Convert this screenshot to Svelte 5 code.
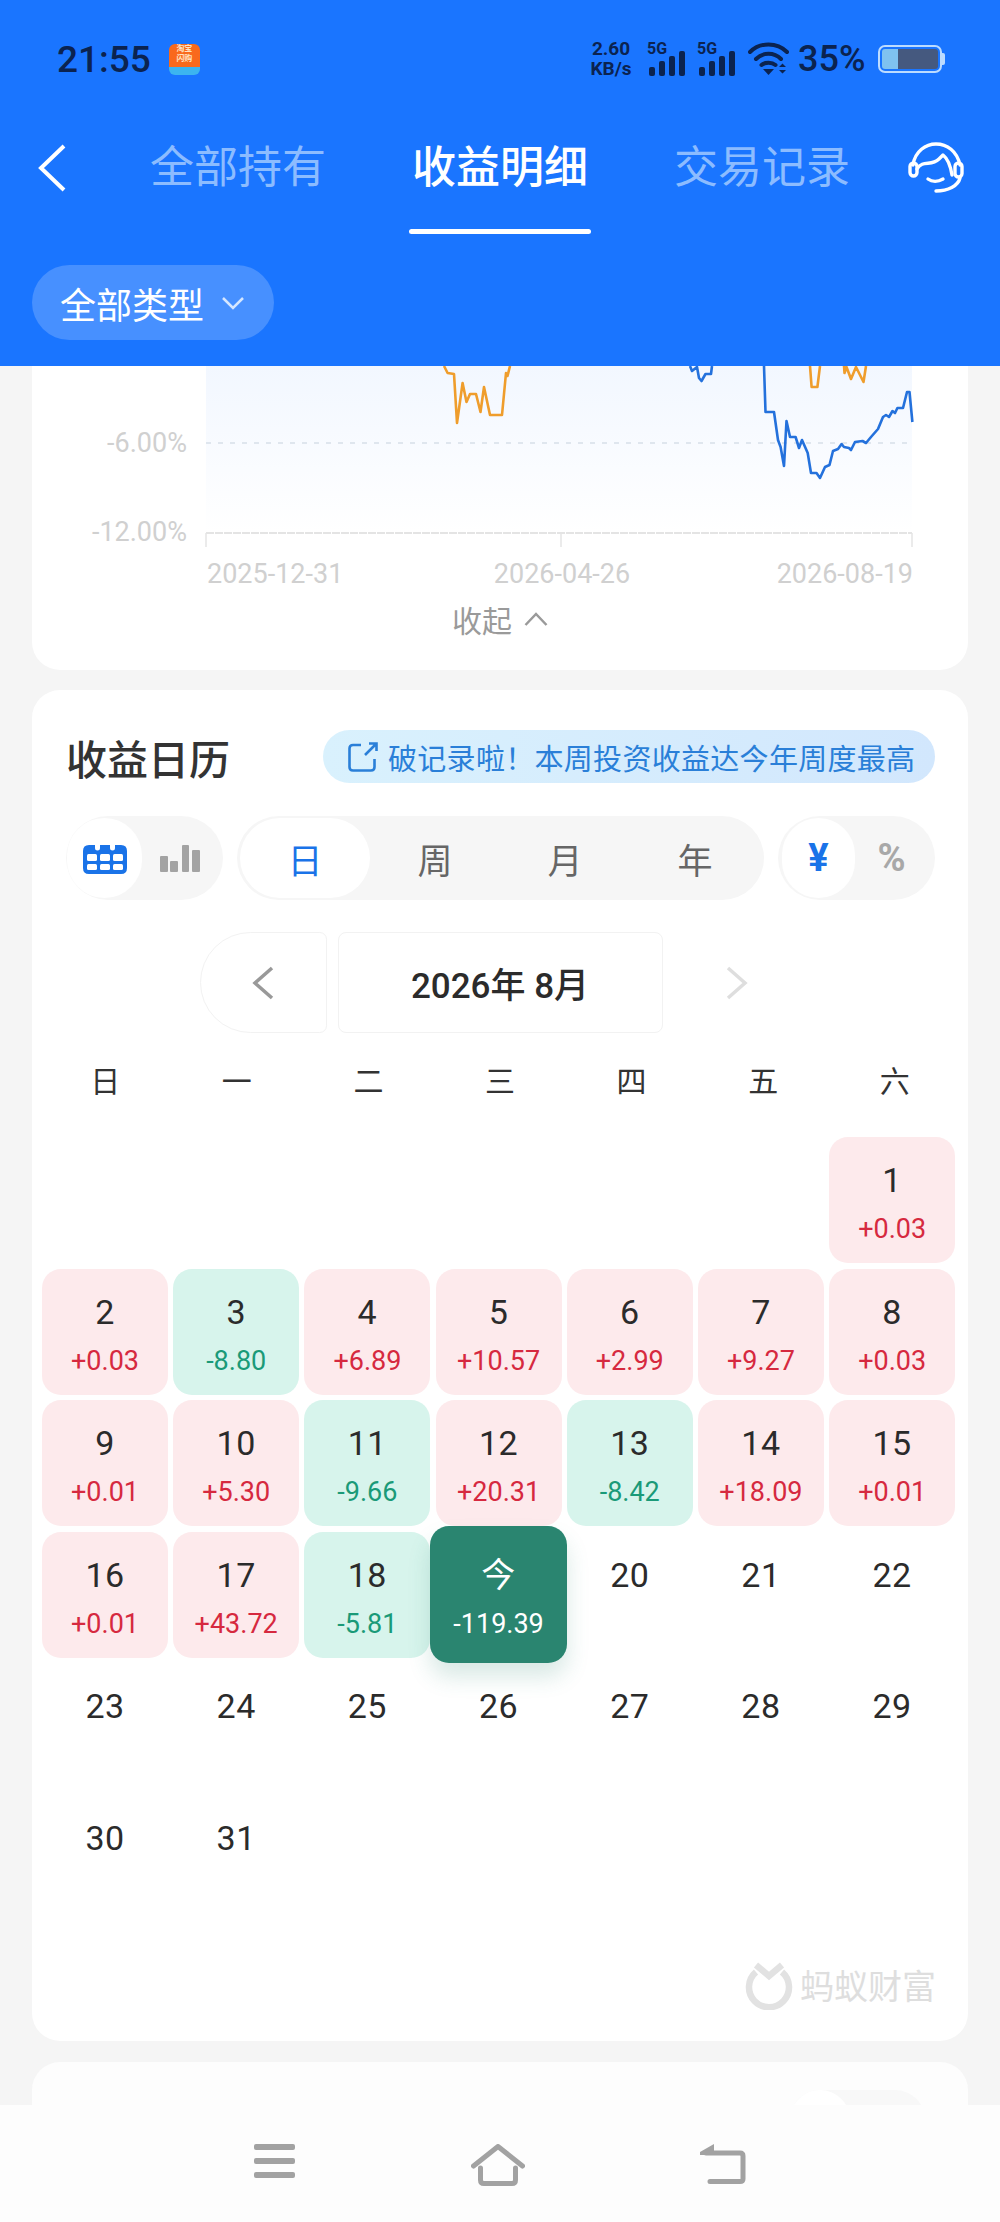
<script>
  // calendar data for the month, null = blank lead-in cell
  const amounts = {
    1: '+0.03', 2: '+0.03', 3: '-8.80', 4: '+6.89', 5: '+10.57', 6: '+2.99', 7: '+9.27', 8: '+0.03',
    9: '+0.01', 10: '+5.30', 11: '-9.66', 12: '+20.31', 13: '-8.42', 14: '+18.09', 15: '+0.01',
    16: '+0.01', 17: '+43.72', 18: '-5.81', 19: '-119.39'
  };
  const today = 19;
  const weekdays = ['日', '一', '二', '三', '四', '五', '六'];
  const cells = [...Array(6).fill(null), ...Array.from({ length: 31 }, (_, i) => i + 1)];

  function tone(day) {
    if (day === today) return 'today';
    const a = amounts[day];
    if (!a) return '';
    return a.startsWith('+') ? 'up' : 'down';
  }

  const orangeLines = [
    '444,366 447.6,373 454,374 457,423 462.6,383 466.5,402 470,394 476,394 480.5,412 484,387 490,415 502,415 506,373 507.5,376 510,366',
    '810,366 811.6,387 817.4,387 820,366',
    '844,366 844.5,373 846.5,367 851,379 856,367 863.5,382 866,366'
  ];
  const blueLines = [
    '690,366 692,371 697,367 699,378 701.5,381 705.5,374 711,374 712,366',
    '764,366 765.5,412 774,412 778,440 780.6,447 784,466 786.5,421 790,437 795.6,437 799,448 802,440 807.7,453 811,473 816.5,473 820,478 825,467 829.5,465 833,451 838,449 841.6,444 844,447 849,448 851,450 855,442 862.5,441 866,443 871,437 878,429 883,417 886,415 889,417 892.5,411 895,413 897.4,408 903,408 907,392 909.5,392 912.4,422'
  ];
</script>

<div class="page">
  <header class="header">
    <div class="status">
      <span class="time">21:55</span>
      <div class="app-icon">
        <span class="app-top">淘宝<br />闪购</span>
        <span class="app-bottom"></span>
      </div>
      <div class="status-right">
        <div class="net"><span>2.60</span><span>KB/s</span></div>
        <svg class="signal" viewBox="0 0 40 34" width="40" height="34">
          <text x="0" y="12" class="sig-text">5G</text>
          <rect x="2" y="25" width="6" height="9" rx="2" />
          <rect x="12" y="19" width="6" height="15" rx="2" />
          <rect x="22" y="14" width="6" height="20" rx="2" />
          <rect x="32" y="9" width="6" height="25" rx="2" />
        </svg>
        <svg class="signal" viewBox="0 0 40 34" width="40" height="34">
          <text x="0" y="12" class="sig-text">5G</text>
          <rect x="2" y="25" width="6" height="9" rx="2" />
          <rect x="12" y="19" width="6" height="15" rx="2" />
          <rect x="22" y="14" width="6" height="20" rx="2" />
          <rect x="32" y="9" width="6" height="25" rx="2" />
        </svg>
        <svg class="wifi" viewBox="0 0 41 34" width="41" height="34">
          <path d="M2 10 C12 0 29 0 39 10" />
          <path d="M8 17 C15 10 26 10 33 17" />
          <path d="M13.500 23 C17 20 24 20 27.500 23" />
          <path class="solid" d="M15 27 H26 L20.500 33 Z" />
          <path class="solid" d="M31 25 L34.500 21.500 L38 25 Z M31 28 H38 L34.500 31.500 Z" />
        </svg>
        <span class="pct">35%</span>
        <div class="battery">
          <div class="batt-body"><span class="batt-low"></span><span class="batt-rest"></span></div>
          <span class="batt-tip"></span>
        </div>
      </div>
    </div>

    <nav class="tabs">
      <svg class="back" viewBox="0 0 28 48" width="28" height="48">
        <path d="M26 2 L3 24 L26 46" />
      </svg>
      <div class="tab">全部持有</div>
      <div class="tab active">收益明细<span class="underline"></span></div>
      <div class="tab">交易记录</div>
      <svg class="headset" viewBox="16 8 60 62" width="60" height="62">
        <path d="M24 34 C26 20 37 13 47 13 C58 13 68 20 71 34" />
        <rect x="21" y="32" width="7" height="13" rx="3.500" />
        <rect x="66" y="32" width="7" height="14" rx="3.500" />
        <path d="M28 38 C34 28 42 36 50 28 L54 24 C58 27 61 32 63 44" />
        <path d="M39 48 C43 51 49 51 54 48" />
        <path d="M71 47 C69 55 59 60 47 60" />
      </svg>
    </nav>

    <div class="chip">
      全部类型
      <svg viewBox="0 0 22 14" width="22" height="14"><path d="M1 2 L11 12 L21 2" /></svg>
    </div>
  </header>

  <main class="content">
    <section class="card chart-card">
      <svg class="chart" viewBox="32 366 936 224" width="936" height="224">
        <defs>
          <linearGradient id="plot" x1="0" y1="0" x2="0" y2="1">
            <stop offset="0" stop-color="#f2f7ff" />
            <stop offset="1" stop-color="#ffffff" />
          </linearGradient>
        </defs>
        <rect x="206" y="366" width="706" height="167" fill="url(#plot)" />
        <line x1="206" y1="443" x2="912" y2="443" class="grid-dash" />
        <line x1="206" y1="533" x2="912" y2="533" class="grid-base" />
        <line x1="206" y1="533" x2="206" y2="547" class="tick" />
        <line x1="561" y1="533" x2="561" y2="547" class="tick" />
        <line x1="912" y1="533" x2="912" y2="547" class="tick" />
        {#each orangeLines as pts}
          <polyline points={pts} class="line orange" />
        {/each}
        {#each blueLines as pts}
          <polyline points={pts} class="line blue" />
        {/each}
        <text x="187" y="452" text-anchor="end" class="axis">-6.00%</text>
        <text x="187" y="541" text-anchor="end" class="axis">-12.00%</text>
        <text x="207" y="583" class="axis">2025-12-31</text>
        <text x="562" y="583" text-anchor="middle" class="axis">2026-04-26</text>
        <text x="913" y="583" text-anchor="end" class="axis">2026-08-19</text>
      </svg>
      <div class="collapse">
        收起
        <svg viewBox="0 0 24 14" width="24" height="14"><path d="M1.500 13 L12 2 L22.500 13" /></svg>
      </div>
    </section>

    <section class="card calendar-card">
      <div class="title-row">
        <h2>收益日历</h2>
        <div class="banner">
          <svg viewBox="0 0 30 30" width="30" height="30">
            <path d="M13 3 H5 Q1.500 3 1.500 6.500 V25 Q1.500 28.500 5 28.500 H23 Q26.500 28.500 26.500 25 V17" />
            <path d="M17 13 L28 2 M21 1.500 H28.500 V9" />
          </svg>
          <span>破记录啦！本周投资收益达今年周度最高</span>
        </div>
      </div>

      <div class="toggles">
        <div class="toggle icons">
          <div class="opt on">
            <svg viewBox="0 0 44 32" width="44" height="32">
              <path fill="#1a73e8" d="M6 3 H12 V1 a2 2 0 0 1 0 0 V6 a2.500 2.500 0 0 0 5 0 V3 H27 V6 a2.500 2.500 0 0 0 5 0 V3 H38 Q44 3 44 9 V26 Q44 32 38 32 H6 Q0 32 0 26 V9 Q0 3 6 3 Z" />
              <g fill="#fff">
                <rect x="4" y="12" width="10" height="7" rx="1.500" />
                <rect x="17" y="12" width="10" height="7" rx="1.500" />
                <rect x="30" y="12" width="10" height="7" rx="1.500" />
                <rect x="4" y="22" width="10" height="6" rx="1.500" />
                <rect x="17" y="22" width="10" height="6" rx="1.500" />
                <rect x="30" y="22" width="10" height="6" rx="1.500" />
              </g>
            </svg>
          </div>
          <div class="opt">
            <svg viewBox="0 0 40 27" width="40" height="27" fill="#a3a3a3">
              <rect x="0" y="11" width="8" height="16" rx="1" />
              <rect x="10" y="16" width="8" height="11" rx="1" />
              <rect x="22" y="0" width="7" height="27" rx="1" />
              <rect x="32" y="5" width="8" height="22" rx="1" />
            </svg>
          </div>
        </div>
        <div class="toggle periods">
          <div class="opt on">日</div>
          <div class="opt">周</div>
          <div class="opt">月</div>
          <div class="opt">年</div>
        </div>
        <div class="toggle units">
          <div class="opt on">¥</div>
          <div class="opt">%</div>
        </div>
      </div>

      <div class="month-row">
        <div class="month-btn prev">
          <svg viewBox="0 0 22 34" width="22" height="34"><path d="M20 2 L3 17 L20 32" /></svg>
        </div>
        <div class="month-title">2026年 8月</div>
        <div class="month-btn next">
          <svg viewBox="0 0 22 34" width="22" height="34"><path d="M2 2 L19 17 L2 32" /></svg>
        </div>
      </div>

      <div class="weekdays">
        {#each weekdays as w}
          <span>{w}</span>
        {/each}
      </div>

      <div class="days">
        {#each cells as day}
          {#if day === null}
            <div class="day"></div>
          {:else}
            <div class="day {tone(day)}">
              <span class="num">{day === today ? '今' : day}</span>
              {#if amounts[day]}
                <span class="amt">{amounts[day]}</span>
              {/if}
            </div>
          {/if}
        {/each}
      </div>

      <div class="watermark">
        <svg viewBox="0 0 48 50" width="48" height="50">
          <path class="ring" d="M11 12 A20 20 0 1 0 37 12" />
          <path class="vee" d="M11 5 L24 16 L37 5" />
        </svg>
        <span>蚂蚁财富</span>
      </div>
    </section>

    <section class="card next-card">
      <div class="mini-toggle"><span></span></div>
    </section>
  </main>

  <footer class="navbar">
    <svg viewBox="0 0 42 34" width="42" height="34" fill="#a2a2a2">
      <rect x="0" y="0" width="41" height="6" rx="2" />
      <rect x="0" y="14" width="41" height="6" rx="2" />
      <rect x="0" y="28" width="41" height="6" rx="2" />
    </svg>
    <svg class="stroke" viewBox="0 0 54 42" width="54" height="42">
      <path d="M2.500 22 L27 2.500 L51.500 22" />
      <path d="M9.500 24 V36 Q9.500 39.500 13 39.500 H41 Q44.500 39.500 44.500 36 V24" />
    </svg>
    <svg class="stroke" viewBox="0 0 46 40" width="46" height="40">
      <path d="M6 9 H40 Q43 9 43 12 V35 Q43 37.500 40 37.500 H10" />
      <path class="head" d="M0 8 L14 0 V11 H0 Z" />
    </svg>
  </footer>
</div>

<style>
  :global(body) {
    margin: 0;
    background: #f5f5f5;
  }

  .page {
    width: 1000px;
    height: 2222px;
    display: flex;
    flex-direction: column;
    overflow: hidden;
    font-family: Roboto, "Noto Sans CJK SC", sans-serif;
    color: #2b2b2b;
  }

  .header {
    height: 366px;
    flex: none;
    background: #1a75ff;
    display: flex;
    flex-direction: column;
  }

  .status {
    height: 118px;
    display: flex;
    align-items: center;
    padding: 0 55px 0 57px;
    color: #0b2350;
  }

  .time {
    font-size: 37px;
    font-weight: 500;
  }

  .app-icon {
    width: 31px;
    height: 31px;
    margin-left: 18px;
    border-radius: 6px;
    overflow: hidden;
    display: flex;
    flex-direction: column;
  }

  .app-top {
    flex: 1;
    background: #f9691c;
    color: #ffe3c4;
    font-size: 8px;
    line-height: 10px;
    text-align: center;
    font-weight: 700;
  }

  .app-bottom {
    height: 8px;
    background: #3cb4f0;
  }

  .status-right {
    margin-left: auto;
    display: flex;
    align-items: center;
  }

  .net {
    width: 42px;
    display: flex;
    flex-direction: column;
    align-items: center;
    font-size: 19px;
    font-weight: 700;
    line-height: 20px;
    margin-right: 15px;
    white-space: nowrap;
  }

  .signal {
    fill: #0b2350;
    margin-right: 10px;
    margin-top: -1px;
  }

  .sig-text {
    font-size: 16px;
    font-weight: 700;
  }

  .wifi {
    margin-left: 1px;
    fill: none;
    stroke: #0b2350;
    stroke-width: 4;
    stroke-linecap: round;
  }

  .wifi .solid {
    fill: #0b2350;
    stroke: none;
  }

  .pct {
    width: 70px;
    margin-left: 9px;
    font-size: 36px;
    font-weight: 500;
  }

  .battery {
    display: flex;
    align-items: center;
    margin-left: 10px;
  }

  .batt-body {
    width: 64px;
    height: 28px;
    box-sizing: border-box;
    border: 2px solid #bcdcff;
    border-radius: 7px;
    padding: 2px;
    display: flex;
  }

  .batt-low {
    width: 16px;
    background: #7fc2f0;
    border-radius: 3px 0 0 3px;
  }

  .batt-rest {
    flex: 1;
    background: #45597f;
    border-radius: 0 3px 3px 0;
  }

  .batt-tip {
    width: 3px;
    height: 12px;
    background: #bcdcff;
    border-radius: 0 2px 2px 0;
  }

  .tabs {
    height: 116px;
    display: flex;
    align-items: flex-start;
    padding: 0 35px 0 38px;
  }

  .back {
    margin: 26px 81px 0 0;
    fill: none;
    stroke: #fff;
    stroke-width: 4;
  }

  .tab {
    width: 182px;
    margin-right: 80px;
    padding-top: 21px;
    display: flex;
    flex-direction: column;
    align-items: center;
    font-size: 44px;
    line-height: 58px;
    color: #8cbcff;
    white-space: nowrap;
  }

  .tab.active {
    color: #fff;
    font-weight: 500;
  }

  .tab:nth-of-type(3) {
    margin-right: 0;
  }

  .underline {
    width: 182px;
    height: 5px;
    margin-top: 32px;
    border-radius: 3px;
    background: #fff;
  }

  .headset {
    margin: 21px 0 0 auto;
    fill: none;
    stroke: #fff;
    stroke-width: 3.4;
    stroke-linecap: round;
    stroke-linejoin: round;
  }

  .chip {
    width: 242px;
    height: 75px;
    margin: 31px 0 0 32px;
    box-sizing: border-box;
    padding-left: 28px;
    display: flex;
    align-items: center;
    gap: 18px;
    border-radius: 38px;
    background: #4790ff;
    color: #fff;
    font-size: 36px;
  }

  .chip svg {
    fill: none;
    stroke: #d5e6ff;
    stroke-width: 2.5;
  }

  .content {
    flex: 1;
    min-height: 0;
    overflow: hidden;
    padding: 0 32px;
    display: flex;
    flex-direction: column;
  }

  .card {
    flex: none;
    background: #fff;
    border-radius: 28px;
  }

  .chart-card {
    border-radius: 0 0 28px 28px;
    height: 304px;
  }

  .chart {
    display: block;
  }

  .grid-dash {
    stroke: #dfe6ee;
    stroke-width: 2;
    stroke-dasharray: 5 7;
  }

  .grid-base {
    stroke: #e4e4e4;
    stroke-width: 2;
    stroke-dasharray: 8 1;
  }

  .tick {
    stroke: #e4e4e4;
    stroke-width: 1.500;
  }

  .line {
    fill: none;
    stroke-width: 2.6;
    stroke-linejoin: round;
  }

  .orange {
    stroke: #ef9d2c;
  }

  .blue {
    stroke: #2471dc;
  }

  .axis {
    font-size: 27px;
    fill: #d0d0d0;
  }

  .collapse {
    margin-top: 12px;
    display: flex;
    justify-content: center;
    align-items: center;
    gap: 12px;
    font-size: 30px;
    line-height: 40px;
    color: #9a9a9a;
  }

  .collapse svg {
    margin-top: -6px;
    fill: none;
    stroke: #9a9a9a;
    stroke-width: 2.5;
  }

  .calendar-card {
    margin-top: 20px;
    height: 1351px;
    box-sizing: border-box;
    padding-top: 40px;
  }

  .title-row {
    height: 53px;
    padding: 0 33px 0 34px;
    display: flex;
    align-items: center;
    justify-content: space-between;
  }

  h2 {
    margin: 0;
    font-size: 41px;
    font-weight: 500;
    color: #333;
  }

  .banner {
    width: 612px;
    height: 53px;
    box-sizing: border-box;
    padding-left: 25px;
    display: flex;
    align-items: center;
    gap: 10px;
    border-radius: 27px;
    background: linear-gradient(90deg, #d9f1fd, #d2e7fd);
    color: #2a7fd8;
    font-size: 29px;
    letter-spacing: 0.3px;
    white-space: nowrap;
  }

  .banner svg {
    flex: none;
    fill: none;
    stroke: #2a7fd8;
    stroke-width: 2.6;
  }

  .toggles {
    margin-top: 33px;
    padding: 0 33px 0 34px;
    display: flex;
    justify-content: space-between;
  }

  .toggle {
    height: 84px;
    box-sizing: border-box;
    padding: 2px 3px;
    display: flex;
    border-radius: 42px;
    background: #f6f6f6;
  }

  .opt {
    display: flex;
    align-items: center;
    justify-content: center;
    border-radius: 40px;
    color: #666;
  }

  .opt.on {
    background: #fff;
    color: #1a73e8;
  }

  .icons {
    width: 157px;
    padding-left: 1px;
  }

  .icons .opt,
  .units .opt {
    width: 75px;
  }

  .periods {
    width: 527px;
    font-size: 35px;
  }

  .periods .opt {
    width: 130px;
  }

  .units {
    width: 157px;
    padding-left: 4px;
    font-size: 38px;
    font-weight: 700;
  }

  .units .opt {
    width: 73px;
    color: #a8a8a8;
  }

  .units .opt.on {
    color: #1a73e8;
  }

  .month-row {
    margin-top: 32px;
    display: flex;
    justify-content: center;
    gap: 11px;
  }

  .month-btn {
    width: 127px;
    height: 101px;
    box-sizing: border-box;
    display: flex;
    align-items: center;
    justify-content: center;
    border: 1.5px solid #f2f2f2;
    fill: none;
    stroke-width: 3.5;
  }

  .prev {
    border-radius: 56px 8px 8px 56px;
    stroke: #999;
  }

  .next {
    border-color: #fff;
    stroke: #dedede;
  }

  .month-title {
    width: 325px;
    height: 101px;
    box-sizing: border-box;
    display: flex;
    align-items: center;
    justify-content: center;
    border: 1.5px solid #f2f2f2;
    border-radius: 8px;
    font-size: 35px;
    font-weight: 500;
  }

  .weekdays {
    margin-top: 29px;
    padding: 0 10px;
    display: grid;
    grid-template-columns: repeat(7, 1fr);
    column-gap: 5.2px;
    text-align: center;
    font-size: 30px;
    line-height: 40px;
    color: #333;
  }

  .days {
    margin-top: 35px;
    padding: 0 10px;
    display: grid;
    grid-template-columns: repeat(7, 126px);
    grid-auto-rows: 126px;
    column-gap: 5.2px;
    row-gap: 5.5px;
  }

  .day {
    box-sizing: border-box;
    padding-top: 23px;
    display: flex;
    flex-direction: column;
    align-items: center;
    border-radius: 19px;
  }

  .num {
    font-size: 34px;
    line-height: 40px;
    letter-spacing: 0.5px;
  }

  .amt {
    margin-top: 14px;
    font-size: 27px;
    line-height: 30px;
  }

  .up {
    background: #fdeaec;
  }

  .up .amt {
    color: #d6293f;
  }

  .down {
    background: #d7f4ec;
  }

  .down .amt {
    color: #1a9a78;
  }

  .today {
    position: relative;
    margin: -5.5px;
    padding-top: 28.5px;
    background: #2a8570;
    color: #fff;
    box-shadow: 0 14px 22px rgba(42, 133, 112, 0.18);
  }

  .watermark {
    margin-top: 39px;
    padding-right: 32px;
    display: flex;
    justify-content: flex-end;
    align-items: center;
    gap: 7px;
    font-size: 34px;
    color: #dedede;
  }

  .ring,
  .vee {
    fill: none;
    stroke: #e2e2e2;
    stroke-width: 6.5;
  }

  .next-card {
    margin-top: 21px;
    height: 120px;
    box-sizing: border-box;
    padding: 28px 43px 0 0;
    background: #fdfdfd;
    display: flex;
    justify-content: flex-end;
  }

  .mini-toggle {
    width: 135px;
    height: 60px;
    border-radius: 30px;
    background: #f8f8f8;
  }

  .mini-toggle span {
    display: block;
    width: 60px;
    height: 60px;
    border-radius: 50%;
    background: #fff;
  }

  .navbar {
    height: 117px;
    flex: none;
    position: relative;
    background: #fdfdfd;
    display: flex;
    align-items: flex-start;
    justify-content: center;
    padding-top: 39px;
    box-sizing: border-box;
    gap: 175px;
  }

  .stroke {
    fill: none;
    stroke: #a2a2a2;
    stroke-width: 5;
    stroke-linecap: round;
    stroke-linejoin: round;
  }

  .stroke .head {
    fill: #a2a2a2;
    stroke: none;
  }
</style>
